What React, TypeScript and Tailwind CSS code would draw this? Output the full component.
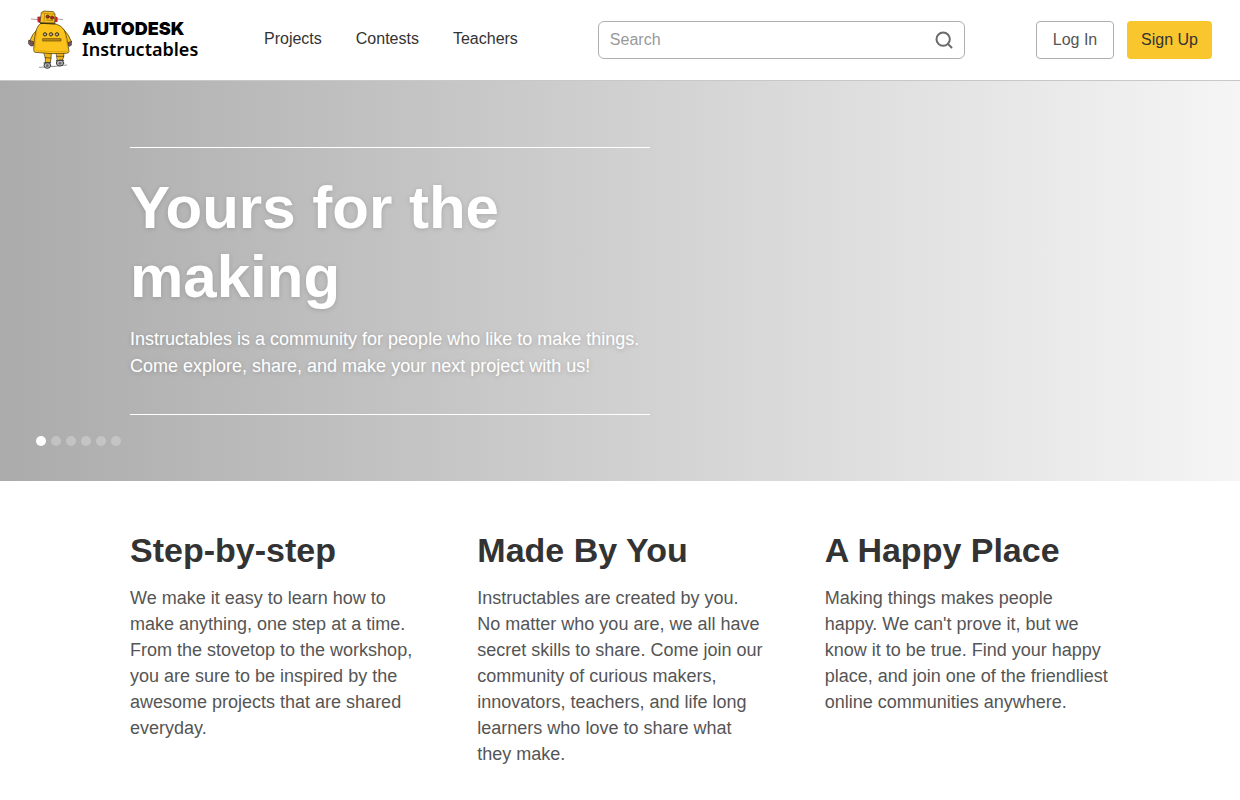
import { Search } from "lucide-react";

const navLinks = ["Projects", "Contests", "Teachers"];

const slides = [1, 2, 3, 4, 5, 6];

const features = [
  {
    title: "Step-by-step",
    text: "We make it easy to learn how to make anything, one step at a time. From the stovetop to the workshop, you are sure to be inspired by the awesome projects that are shared everyday.",
  },
  {
    title: "Made By You",
    text: "Instructables are created by you. No matter who you are, we all have secret skills to share. Come join our community of curious makers, innovators, teachers, and life long learners who love to share what they make.",
  },
  {
    title: "A Happy Place",
    text: "Making things makes people happy. We can't prove it, but we know it to be true. Find your happy place, and join one of the friendliest online communities anywhere.",
  },
];

function Robot() {
  return (
    <svg
      viewBox="24 15 132 180"
      className="h-15 w-11 shrink-0"
      strokeLinejoin="round"
      strokeLinecap="round"
      aria-hidden="true"
    >
      {/* ground shadow */}
      <path d="M58 187 L104 184 M98 185 L140 180" stroke="#999" strokeWidth="3" />

      {/* antennae and ears */}
      <path d="M34 42 L54 44 M112 42 L128 44" stroke="#8a7070" strokeWidth="2" />
      <path d="M53 36 L61 35 L61 53 L54 51 Z M106 35 L112 37 L112 50 L105 51 Z" fill="#d5202c" stroke="#6b1518" strokeWidth="1" />

      {/* legs */}
      <path d="M72 142 L94 144 L93 160 L91 172 L76 174 L76 160 Z" fill="#f0b41a" stroke="#3a2d08" strokeWidth="2" />
      <path d="M109 142 L132 141 L131 156 L127 165 L113 167 Z" fill="#f0b41a" stroke="#3a2d08" strokeWidth="2" />
      <path d="M75 158 L93 159 M111 154 L131 154" stroke="#3a2d08" strokeWidth="2" />

      {/* wheels */}
      <ellipse cx="82" cy="181" rx="10" ry="9" fill="#b5b5b5" stroke="#3d3d3d" strokeWidth="3" />
      <circle cx="82" cy="182" r="4" fill="#666" />
      <path d="M72 174 L92 173" stroke="#444" strokeWidth="3" />
      <ellipse cx="120" cy="174" rx="11" ry="9" fill="#b5b5b5" stroke="#3d3d3d" strokeWidth="3" />
      <circle cx="120" cy="175" r="4" fill="#666" />
      <path d="M109 167 L131 166" stroke="#444" strokeWidth="3" />

      {/* arms and hands */}
      <path d="M53 72 Q37 86 29 108 L40 118 L50 108 Z" fill="#f6bd1b" stroke="#3a2d08" strokeWidth="2" />
      <path d="M130 72 Q148 90 154 110 L145 120 L136 114 Z" fill="#f6bd1b" stroke="#3a2d08" strokeWidth="2" />
      <path d="M27 106 L40 110 L40 122 L33 123 L26 117 Z" fill="#77545a" stroke="#33282c" strokeWidth="2" />
      <path d="M155 109 L144 113 L143 121 L150 124 L155 119 Z" fill="#77545a" stroke="#33282c" strokeWidth="2" />

      {/* body */}
      <path
        d="M63 55 L105 56 Q124 60 133 76 Q142 98 147 140 Q146 144 140 145 Q92 148 45 142 Q41 141 41 134 Q42 98 48 78 Q53 60 63 55 Z"
        fill="#fbc31b"
        stroke="#3a2d08"
        strokeWidth="2"
      />
      <path d="M50 84 Q46 106 45 128 M137 94 L143 128 M50 137 Q98 142 141 139" fill="none" stroke="#d59a10" strokeWidth="2" />

      {/* head */}
      <path d="M65 22 L72 18 L100 20 L105 27 L104 54 L61 53 Z" fill="#f9c11a" stroke="#3a2d08" strokeWidth="2" />
      <path d="M66 24 L104 28 M74 27 L72 50" stroke="#a5780d" strokeWidth="2" />
      <ellipse cx="83" cy="35" rx="5" ry="5" fill="#c61f2a" stroke="#3a2d08" strokeWidth="2" />
      <ellipse cx="96" cy="38" rx="5" ry="5" fill="#c61f2a" stroke="#3a2d08" strokeWidth="2" />
      <path d="M79 45 L98 47" stroke="#8b6510" strokeWidth="2" />
      <path d="M62 55 L105 57" stroke="#3a2d08" strokeWidth="3" />

      {/* chest buttons and slot */}
      <g fill="#b9b4ab" stroke="#3a2d08" strokeWidth="3">
        <circle cx="75" cy="88" r="5" />
        <circle cx="93" cy="88" r="5" />
        <circle cx="111" cy="88" r="5" />
      </g>
      <rect x="69" y="101" width="54" height="7" fill="#c08d17" stroke="#5c450c" strokeWidth="2" />
    </svg>
  );
}

function Header() {
  return (
    <header className="flex h-[81px] items-center border-b border-[#c8c8c8] bg-white px-7">
      <a href="#" className="flex w-[170px] shrink-0 items-center gap-[10px] text-black">
        <Robot />
        <span className="flex flex-col pb-[2px]">
          <span className="font-['Inter',sans-serif] text-[18px] leading-5 font-black">AUTODESK</span>
          <span className="font-['Noto_Sans',sans-serif] text-[18px] leading-5 font-semibold">Instructables</span>
        </span>
      </a>

      <nav className="ml-[66px] flex gap-[34px] pb-[3px] text-[#333]">
        {navLinks.map((link) => (
          <a key={link} href="#" className="hover:underline">
            {link}
          </a>
        ))}
      </nav>

      <form className="ml-20 flex h-[38px] flex-1 items-center rounded-md border border-[#b0b0b0] pr-[10px] pl-[11px]">
        <input
          type="search"
          aria-label="Search"
          placeholder="Search"
          className="min-w-0 flex-1 outline-none placeholder:text-[#999]"
        />
        <button type="button" aria-label="Submit search">
          <Search className="size-5 text-[#6a6a6a]" strokeWidth={2.4} />
        </button>
      </form>

      <div className="ml-[71px] flex gap-[13px]">
        <button className="h-[38px] w-[78px] rounded border border-[#b0b0b0] text-[#555]">
          Log In
        </button>
        <button className="h-[38px] w-[85px] rounded bg-[#fac62d] text-[#333]">
          Sign Up
        </button>
      </div>
    </header>
  );
}

function Hero() {
  return (
    <section className="relative flex h-[400px] items-center bg-linear-to-r/srgb from-[#ababab] to-[#f5f5f5]">
      <div className="mx-auto w-full max-w-[980px]">
        <div className="max-w-[520px] border-y border-white pt-[25px] pb-[34px] text-white">
          <h1 className="text-[60px] leading-[69px] font-bold text-shadow-[0_1px_5px_rgb(0_0_0/0.15)]">
            Yours for the making
          </h1>
          <p className="mt-[15px] text-lg leading-[27px] text-shadow-[0_1px_5px_rgb(0_0_0/0.2)]">
            Instructables is a community for people who like to make things.
            Come explore, share, and make your next project with us!
          </p>
        </div>
      </div>

      {/* Slide dots */}
      <div className="absolute bottom-[35px] left-9 flex gap-[5px]">
        {slides.map((slide) => (
          <button
            key={slide}
            aria-label={`Slide ${slide}`}
            className={`size-[10px] rounded-full ${slide === 1 ? "bg-white" : "bg-white/25"}`}
          />
        ))}
      </div>
    </section>
  );
}

export default function App() {
  return (
    <div className="min-h-screen bg-white font-['Liberation_Sans',Arial,sans-serif] text-base">
      <Header />

      <main>
        <Hero />

        <section className="mx-auto grid max-w-[980px] grid-cols-3 gap-[62px] pt-[49px]">
          {features.map((feature) => (
            <div key={feature.title}>
              <h2 className="text-[34px] leading-10 font-bold text-[#333]">{feature.title}</h2>
              <p className="mt-[15px] text-lg leading-[26px] text-[#555]">{feature.text}</p>
            </div>
          ))}
        </section>
      </main>
    </div>
  );
}
